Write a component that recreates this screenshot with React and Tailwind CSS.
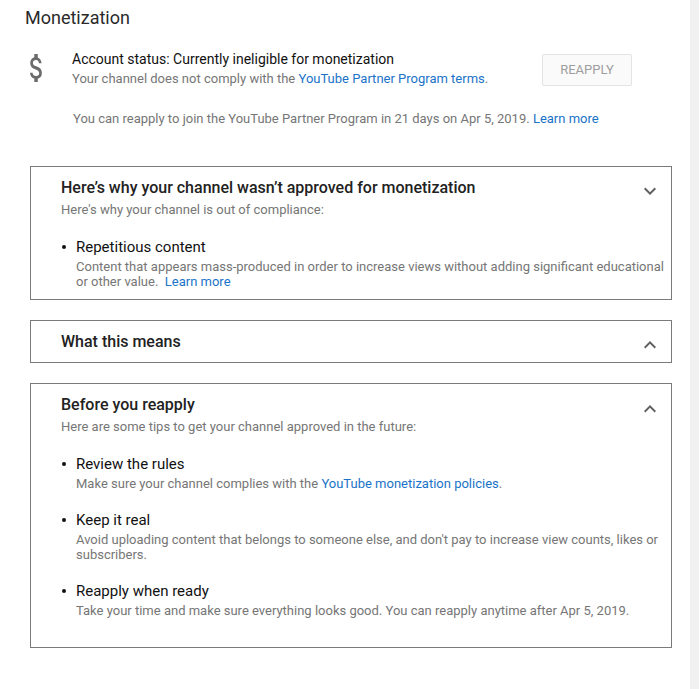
import React from "react";

const Chevron = ({ up }) => (
  <svg width="24" height="24" viewBox="0 0 24 24" className={up ? "rotate-180" : ""} fill="#606060">
    <path d="M16.59 8.59L12 13.17 7.41 8.59 6 10l6 6 6-6z" />
  </svg>
);

const DollarIcon = () => (
  <svg width="13" height="28" viewBox="6.3 3 11.2 18" preserveAspectRatio="none" fill="#6b6b6b">
    <path d="M11.8 10.9c-2.27-.59-3-1.2-3-2.15 0-1.09 1.01-1.85 2.7-1.85 1.78 0 2.44.85 2.5 2.1h2.21c-.07-1.72-1.12-3.3-3.21-3.81V3h-3v2.16c-1.94.42-3.5 1.68-3.5 3.61 0 2.31 1.91 3.46 4.7 4.13 2.5.6 3 1.48 3 2.41 0 .69-.49 1.79-2.7 1.79-2.06 0-2.87-.92-2.98-2.1h-2.2c.12 2.19 1.76 3.42 3.68 3.83V21h3v-2.15c1.95-.37 3.5-1.5 3.5-3.55 0-2.84-2.43-3.81-4.7-4.4z" />
  </svg>
);

function Item({ title, children, first }) {
  return (
    <div className={first ? "mt-[18px]" : "mt-[19px]"}>
      <div className="flex items-center text-[15px] leading-[20px] text-[#111]">
        <span className="ml-[31px] mr-[10px] h-[4px] w-[4px] rounded-full bg-[#111]" />
        {title}
      </div>
      <div className="mt-[2px] pl-[45px] pr-[2px] text-[13px] leading-[15px] text-[#767676]">{children}</div>
    </div>
  );
}

function Section({ title, subtitle, up, className, children }) {
  return (
    <div className={"ml-[30px] mr-[18px] border border-[#7a7a7a] " + className}>
      <div className="flex items-start justify-between pl-[30px] pr-[9px]">
        <div>
          <div className="text-[16px] leading-[22px] font-medium text-[#222]">{title}</div>
          <div className="mt-[2px] text-[13px] leading-[18px] text-[#767676]">{subtitle}</div>
        </div>
        <div className={up ? "mt-[3px]" : "mt-[2px]"}>
          <Chevron up={up} />
        </div>
      </div>
      {children}
    </div>
  );
}

const Link = ({ children }) => <span className="text-[#1a73c8]">{children}</span>;

export default function App() {
  return (
    <div className="flex min-h-[689px] bg-white font-['Roboto',sans-serif]">
      <div className="flex-1 pb-10">
        <h1 className="pl-[25px] pt-[6px] text-[18px] leading-[24px] text-[#2a2a2a]">Monetization</h1>

        <div className="mt-[19px] flex items-start">
          <div className="ml-[30px] mt-[5px] w-[42px]">
            <DollarIcon />
          </div>
          <div className="flex-1">
            <div className="text-[14px] leading-[20px] text-[#111]">Account status: Currently ineligible for monetization</div>
            <div className="text-[13px] leading-[20px] text-[#767676]">
              Your channel does not comply with the <Link>YouTube Partner Program terms</Link>.
            </div>
          </div>
          <button className="mr-[58px] mt-[5px] h-[32px] w-[90px] rounded-[2px] border border-[#e3e3e3] bg-[#fafafa] text-[13px] text-[#9e9e9e]">
            REAPPLY
          </button>
        </div>

        <div className="mt-[20px] pl-[73px] text-[13px] leading-[20px] text-[#767676]">
          You can reapply to join the YouTube Partner Program in 21 days on Apr 5, 2019. <Link>Learn more</Link>
        </div>

        <Section
          className="mt-[37px] pt-[10px] pb-[10px]"
          title="Here’s why your channel wasn’t approved for monetization"
          subtitle="Here's why your channel is out of compliance:"
        >
          <Item first title="Repetitious content">
            Content that appears mass-produced in order to increase views without adding significant educational or other value.{"\u00a0 "}
            <Link>Learn more</Link>
          </Item>
        </Section>

        <div className="ml-[30px] mr-[18px] mt-[20px] flex h-[43px] items-center justify-between border border-[#7a7a7a] pl-[30px] pr-[9px]">
          <div className="text-[16px] font-medium text-[#222]">What this means</div>
          <div className="mt-[6px]">
            <Chevron up />
          </div>
        </div>

        <Section
          up
          className="mt-[20px] pt-[10px] pb-[29px]"
          title="Before you reapply"
          subtitle="Here are some tips to get your channel approved in the future:"
        >
          <Item first title="Review the rules">
            Make sure your channel complies with the <Link>YouTube monetization policies</Link>.
          </Item>
          <Item title="Keep it real">
            Avoid uploading content that belongs to someone else, and don't pay to increase view counts, likes or subscribers.
          </Item>
          <Item title="Reapply when ready">
            Take your time and make sure everything looks good. You can reapply anytime after Apr 5, 2019.
          </Item>
        </Section>
      </div>
      <div className="w-[9px] bg-[#f1f1f1]" />
    </div>
  );
}
